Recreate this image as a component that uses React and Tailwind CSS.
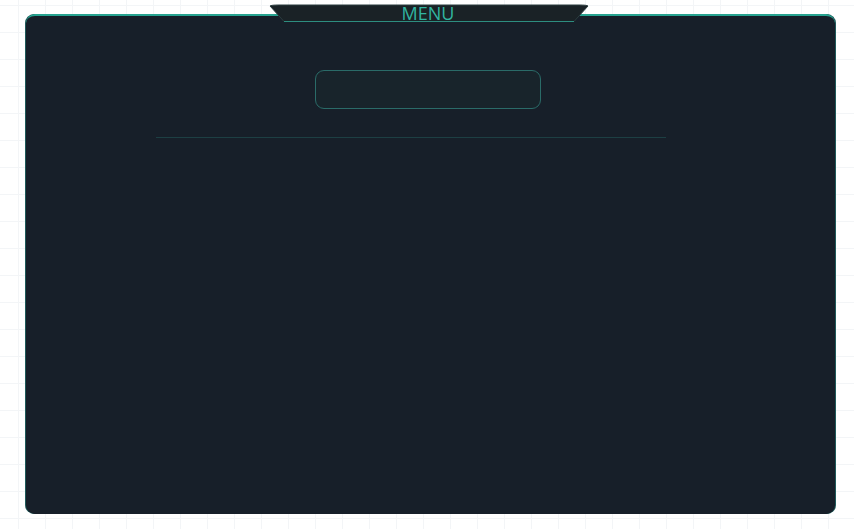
import React from "react";

export default function App() {
  return (
    <div className="relative w-[854px] h-[529px] overflow-hidden bg-white bg-[linear-gradient(to_right,#f3f5f7_1px,transparent_1px),linear-gradient(to_bottom,#f3f5f7_1px,transparent_1px)] bg-[size:27px_27px] bg-[position:18px_5px]">
      <div className="absolute left-[26px] top-[14px] w-[809px] h-[500px] rounded-[9px] bg-[#171f29] border-t-2 border-[#27a390] shadow-[-1px_0_0_#1f5a5a,1px_0_0_#1f5a5a] flex flex-col items-center">
        <div className="mt-[54px] ml-[-6px] w-[226px] h-[39px] rounded-[9px] border border-[#2a6b68] bg-[#18242b]" />
        <div className="mt-[28px] ml-[-40px] w-[510px] h-px bg-[#1d3f43]" />
      </div>

      {/* top tab */}
      <div className="absolute left-[269px] top-[4px] w-[320px] h-[19px]">
        <svg width="320" height="19" viewBox="0 0 320 19" className="absolute inset-0">
          <path d="M1 2 Q2 1 10 1 L310 1 Q318 1 319 2 L305 17.5 L15 17.5 Z" fill="#1a2226" stroke="#2b3d3f" strokeWidth="1" />
          <path d="M15 17.5 L305 17.5" stroke="#2d8d80" strokeWidth="1.2" />
        </svg>
        <div className="relative flex justify-center items-center h-[18px] pr-[2px] text-[18px] leading-none text-[#31b5a1] font-['Open_Sans',sans-serif]">
          MENU
        </div>
      </div>
    </div>
  );
}
